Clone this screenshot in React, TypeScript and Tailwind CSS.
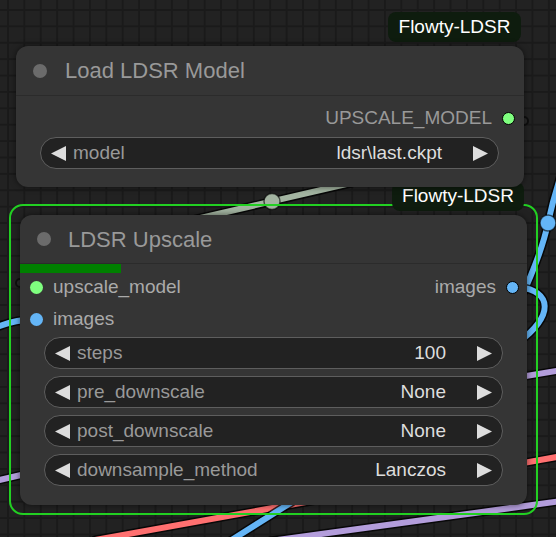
import React from "react";

const FONT = "font-['Liberation_Sans',Arial,sans-serif]";

function Arrow({ dir }: { dir: "left" | "right" }) {
  return (
    <svg width="15" height="15" viewBox="0 0 15 15" className="shrink-0">
      <polygon points={dir === "left" ? "15,0 15,15 0,7.5" : "0,0 0,15 15,7.5"} fill="#dddddd" />
    </svg>
  );
}

function Combo({ label, value }: { label: string; value: string }) {
  return (
    <div className="flex h-[32px] items-center rounded-full border-[1.5px] border-[#5e5e5e] bg-[#222222] pl-[10px] pr-[10px] text-[19px]">
      <Arrow dir="left" />
      <span className="ml-[7px] text-[#999999]">{label}</span>
      <span className="ml-auto mr-[31px] text-[#dddddd]">{value}</span>
      <Arrow dir="right" />
    </div>
  );
}

function Dot({ color, ring = false }: { color: string; ring?: boolean }) {
  return (
    <span
      className={`block h-[13px] w-[13px] shrink-0 rounded-full ${ring ? "border-[1.5px] border-black" : ""}`}
      style={{ backgroundColor: color }}
    />
  );
}

function Badge({ className }: { className: string }) {
  return (
    <div className={`absolute flex items-center justify-center rounded-[8px] bg-[#0e1c0e] text-[19px] text-white ${className}`}>
      Flowty-LDSR
    </div>
  );
}

function Wires() {
  const wire = (d: string, color: string, key: string) => (
    <g key={key}>
      <path d={d} stroke="#000" strokeOpacity="0.75" strokeWidth="9" fill="none" strokeLinecap="round" />
      <path d={d} stroke={color} strokeWidth="6" fill="none" strokeLinecap="round" />
    </g>
  );
  return (
    <svg className="absolute inset-0" width="556" height="537" viewBox="0 0 556 537">
      {wire("M 140 232 L 420 167", "#a3b4a1", "gray")}
      <circle cx="272" cy="201.5" r="8" fill="#a3b4a1" stroke="#000" strokeOpacity="0.6" strokeWidth="1.5" />
      {wire("M -5 328 Q 12 320 36 319", "#64b5f6", "blueL")}
      {wire("M -5 481 C 150 445, 380 400, 562 370", "#b39ddb", "purpleA")}
      {wire("M 95 540 L 562 456", "#ff7070", "red")}
      {wire("M 230 541 L 292 502", "#64b5f6", "blueB")}
      {wire("M 270 541 Q 420 521 562 501", "#b39ddb", "purpleB")}
      {wire("M 520 300 C 535 268, 544 242, 548 223 S 556 190, 562 172", "#64b5f6", "blueR")}
      <circle cx="548" cy="223" r="8" fill="#64b5f6" stroke="#000" strokeOpacity="0.6" strokeWidth="1.5" />
      {wire("M 512 287 C 550 287, 556 312, 524 338", "#64b5f6", "loop")}
      <circle cx="524" cy="121" r="4" fill="#2a2a2a" stroke="#0e0e0e" strokeWidth="2" />
      <circle cx="20" cy="283" r="4" fill="#2a2a2a" stroke="#0e0e0e" strokeWidth="2" />
    </svg>
  );
}

export default function App() {
  return (
    <div
      className={`relative h-[537px] w-[556px] overflow-hidden bg-[#222222] bg-[linear-gradient(90deg,#1a1a1a_2px,transparent_2px),linear-gradient(180deg,#1a1a1a_2px,transparent_2px)] bg-[size:16.4px_16.4px] bg-[position:7px_9px] ${FONT}`}
    >
      <Wires />

      {/* selection outline of LDSR Upscale */}
      <div className="absolute left-[9px] top-[204px] h-[311px] w-[529px] rounded-[14px] border-2 border-[#22d022]" />
      <Badge className="left-[392px] top-[182px] h-[29px] w-[132px]" />

      {/* LDSR Upscale */}
      <div className="absolute left-[20px] top-[215px] flex h-[290px] w-[507px] flex-col overflow-hidden rounded-[12px] bg-[#353535] shadow-[0_0_6px_rgba(0,0,0,0.55)]">
        <div className="flex h-[49px] shrink-0 items-center gap-[17px] border-b border-[#2b2b2b] pl-[17px]">
          <span className="block h-[14px] w-[14px] rounded-full bg-[#6b6b6b]" />
          <span className="text-[22px] text-[#999999]">LDSR Upscale</span>
        </div>
        <div className="h-[9px] w-[101px] shrink-0 bg-[#008000]" />
        <div className="flex h-[28px] shrink-0 items-center pl-[10px] pr-[8px] text-[19px] text-[#aaaaaa]">
          <Dot color="#7fff7f" />
          <span className="ml-[10px]">upscale_model</span>
          <span className="ml-auto mr-[10px]">images</span>
          <Dot color="#64b5f6" ring />
        </div>
        <div className="mt-[2px] flex h-[32px] shrink-0 items-center pl-[10px] text-[19px] text-[#aaaaaa]">
          <Dot color="#64b5f6" />
          <span className="ml-[10px]">images</span>
        </div>
        <div className="mx-[24px] mt-[2px] flex flex-col gap-[7px]">
          <Combo label="steps" value="100" />
          <Combo label="pre_downscale" value="None" />
          <Combo label="post_downscale" value="None" />
          <Combo label="downsample_method" value="Lanczos" />
        </div>
      </div>

      <Badge className="left-[388px] top-[12px] h-[30px] w-[133px]" />

      {/* Load LDSR Model */}
      <div className="absolute left-[16px] top-[46px] flex h-[141px] w-[508px] flex-col rounded-[12px] bg-[#353535] shadow-[0_0_6px_rgba(0,0,0,0.55)]">
        <div className="flex h-[50px] shrink-0 items-center gap-[18px] border-b border-[#2b2b2b] pl-[17px]">
          <span className="block h-[14px] w-[14px] rounded-full bg-[#6b6b6b]" />
          <span className="text-[22px] text-[#999999]">Load LDSR Model</span>
        </div>
        <div className="mt-[6px] flex h-[32px] shrink-0 items-center justify-end gap-[10px] pr-[9px] text-[19px] text-[#999999]">
          <span>UPSCALE_MODEL</span>
          <Dot color="#7fff7f" ring />
        </div>
        <div className="ml-[24px] mr-[25px] mt-[3px]">
          <Combo label="model" value="ldsr\last.ckpt" />
        </div>
      </div>
    </div>
  );
}
